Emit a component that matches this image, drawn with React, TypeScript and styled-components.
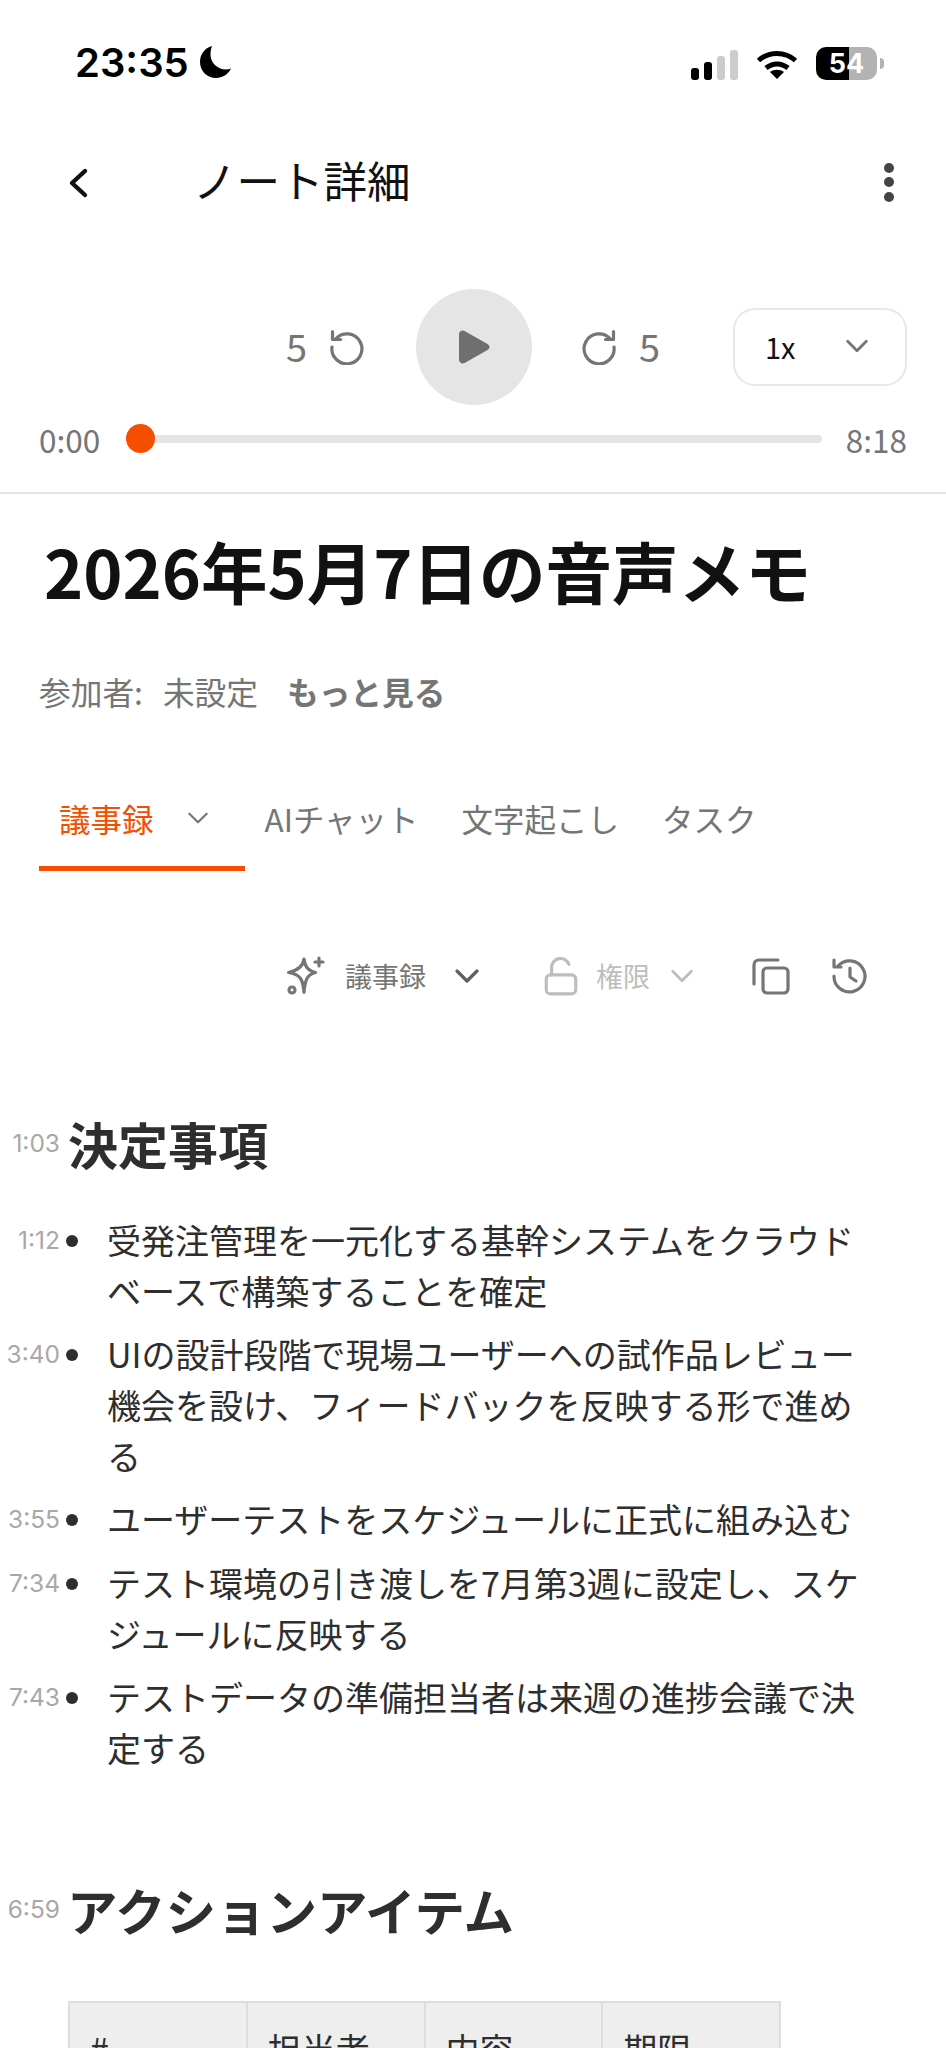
import React from "react";
import styled, { createGlobalStyle } from "styled-components";

const GlobalStyle = createGlobalStyle`
  html, body {
    margin: 0;
    padding: 0;
    background: #fff;
  }
  * {
    box-sizing: border-box;
  }
`;

const jp = `"Noto Sans CJK JP", "Noto Sans", sans-serif`;

const Page = styled.div`
  width: 946px;
  height: 2048px;
  overflow: hidden;
  background: #fff;
  font-family: ${jp};
  color: #2b2b2b;
`;

/* status bar */
const StatusBar = styled.div`
  height: 120px;
  padding: 42px 69px 0 75px;
  display: flex;
  justify-content: space-between;
  align-items: flex-start;
`;

const Clock = styled.div`
  display: flex;
  align-items: center;
  gap: 10px;
  height: 40px;
  font-family: Inter, sans-serif;
  font-size: 40px;
  font-weight: 600;
  color: #000;
`;

const StatusIcons = styled.div`
  display: flex;
  align-items: flex-end;
  height: 38px;
`;

const Signal = styled.div`
  display: flex;
  align-items: flex-end;
  gap: 5px;
  margin-right: 18px;
`;

const SignalBar = styled.span<{ $h: number; $on?: boolean }>`
  width: 8px;
  height: ${(p) => p.$h}px;
  border-radius: 3px;
  background: ${(p) => (p.$on ? "#000" : "#cccccc")};
`;

const Battery = styled.div`
  position: relative;
  width: 61px;
  height: 33px;
  margin-left: 18px;
  border-radius: 10px;
  background: linear-gradient(90deg, #000 54%, #b3b3b3 54%);
  color: #fff;
  font-family: Inter, sans-serif;
  font-size: 27px;
  font-weight: 700;
  line-height: 33px;
  text-align: center;

  &::after {
    content: "";
    position: absolute;
    right: -7px;
    top: 11px;
    width: 4px;
    height: 11px;
    border-radius: 0 4px 4px 0;
    background: #b3b3b3;
  }
`;

/* header */
const Header = styled.header`
  height: 126px;
  padding: 0 52px 0 64px;
  display: flex;
  align-items: center;
  margin-bottom: 43px;
`;

const Title = styled.h1`
  flex: 1;
  margin: 0 0 6px 99px;
  font-size: 43.5px;
  font-weight: 400;
  color: #111;
  line-height: 60px;
`;

const Dots = styled.div`
  display: flex;
  flex-direction: column;
  gap: 4.5px;
  margin-bottom: 2px;
`;

const Dot = styled.span`
  width: 10px;
  height: 10px;
  border-radius: 50%;
  background: #444;
`;

/* player */
const Transport = styled.div`
  height: 116px;
  padding: 0 39px 0 286px;
  display: flex;
  align-items: center;
`;

const SkipLabel = styled.span`
  font-size: 38px;
  line-height: 42px;
  padding-bottom: 2px;
  color: #757575;
`;

const Skip = styled.div<{ $gap: number }>`
  display: flex;
  align-items: center;
  gap: ${(p) => p.$gap}px;
`;

const PlayButton = styled.button`
  width: 116px;
  height: 116px;
  margin: 0 49px 0 51px;
  padding: 0;
  border: none;
  border-radius: 50%;
  background: #e5e5e5;
  display: flex;
  align-items: center;
  justify-content: center;
`;

const Speed = styled.div`
  width: 174px;
  height: 78px;
  margin-left: auto;
  padding: 0 34px 2px 30px;
  border: 2px solid #e8e8e8;
  border-radius: 22px;
  display: flex;
  align-items: center;
  justify-content: space-between;
  font-size: 29px;
  line-height: 40px;
  color: #111;
`;

const ProgressRow = styled.div`
  height: 89px;
  padding: 0 39px 20px;
  border-bottom: 2px solid #e5e5e5;
  display: flex;
  align-items: center;
  font-size: 31.5px;
  color: #757575;
`;

const Track = styled.div`
  flex: 1;
  height: 8px;
  margin: 0 24px 0 26px;
  border-radius: 4px;
  background: #e5e5e5;
  display: flex;
  align-items: center;
`;

const Thumb = styled.span`
  width: 29px;
  height: 29px;
  border-radius: 50%;
  background: #f54e00;
`;

/* note head */
const NoteTitle = styled.h2`
  margin: 31px 0 0 44px;
  font-size: 66.5px;
  line-height: 90px;
  font-weight: 700;
  color: #111;
`;

const Participants = styled.div`
  margin: 54px 0 0 39px;
  display: flex;
  font-size: 31.7px;
  line-height: 44px;
  color: #757575;
`;

const ParticipantValue = styled.span`
  margin-left: 20px;
`;

const More = styled.strong`
  margin-left: 29px;
  font-weight: 700;
`;

/* tabs */
const Tabs = styled.nav`
  margin: 68px 0 0 39px;
  display: flex;
  height: 90px;
`;

const Tab = styled.div<{ $active?: boolean }>`
  display: flex;
  align-items: center;
  gap: 31px;
  height: 90px;
  padding: ${(p) => (p.$active ? "0 34px 12px 20px" : "0 20px 12px")};
  margin-right: ${(p) => (p.$active ? "0" : "3px")};
  font-size: 31.5px;
  color: ${(p) => (p.$active ? "#f54e00" : "#757575")};
  border-bottom: 5px solid ${(p) => (p.$active ? "#f54e00" : "transparent")};
`;

/* note toolbar */
const Toolbar = styled.div`
  margin-top: 83px;
  padding-left: 286px;
  height: 44px;
  display: flex;
  align-items: center;
`;

const ToolLabel = styled.span<{ $muted?: boolean }>`
  font-size: 27px;
  line-height: 40px;
  color: ${(p) => (p.$muted ? "#bdbdbd" : "#757575")};
`;

const ToolGroup = styled.div<{ $gap: number; $after: number }>`
  display: flex;
  align-items: center;
  gap: ${(p) => p.$gap}px;
  margin-right: ${(p) => p.$after}px;
`;

const ToolSpacer = styled.span`
  width: 26px;
`;

/* document */
const Doc = styled.main`
  margin-top: 110px;
`;

const SectionHead = styled.div`
  display: flex;
  align-items: center;
  height: 70px;
  padding-left: 5px;
`;

const Stamp = styled.span`
  width: 55px;
  flex: none;
  text-align: right;
  font-family: Inter, sans-serif;
  font-size: 24.5px;
  color: #a8a8a8;
`;

const SectionTitle = styled.h3`
  margin: 0 0 0 8px;
  font-size: 50px;
  line-height: 70px;
  font-weight: 700;
  color: #2e2e2e;
`;

const ActionTitle = styled(SectionTitle)`
  margin-left: 7px;
  font-size: 50.5px;
`;

const List = styled.ul`
  list-style: none;
  margin: 36px 0 0;
  padding: 0;
  display: flex;
  flex-direction: column;
  gap: 12px;
`;

const Item = styled.li`
  display: grid;
  grid-template-columns: 60px 12px 802px;
  font-size: 34px;
  line-height: 51px;
  color: #2e2e2e;
`;

const ItemStamp = styled.span`
  padding-top: 1px;
  text-align: right;
  font-family: Inter, sans-serif;
  font-size: 24.5px;
  color: #a8a8a8;
`;

const Bullet = styled.span`
  width: 12px;
  height: 12px;
  margin: 21px 0 0 6px;
  border-radius: 50%;
  background: #2e2e2e;
`;

const ItemText = styled.span`
  margin-left: 35px;
`;

const ActionHead = styled(SectionHead)`
  margin-top: 101px;
`;

/* table */
const Table = styled.div`
  margin: 57px 0 0 68px;
  width: 713px;
  display: grid;
  grid-template-columns: repeat(4, 1fr);
  border: 2px solid #dddddd;
  border-right: none;
`;

const HeadCell = styled.div`
  padding: 20px 20px 24px;
  background: #eeeeee;
  border-right: 2px solid #dddddd;
  font-size: 34px;
  line-height: 51px;
  color: #2e2e2e;
`;

const ICON = "#757575";

const Chevron = ({ size, color = ICON, w = 2.4 }: { size: number; color?: string; w?: number }) => (
  <svg width={size} height={size} viewBox="0 0 24 24" fill="none" stroke={color} strokeWidth={w} strokeLinecap="round" strokeLinejoin="round">
    <path d="M4 8l8 8 8-8" />
  </svg>
);

const Moon = () => (
  <svg width="33" height="34" viewBox="0 0 33 34">
    <path d="M13 1C5.500 3 1 9.500 1 17c0 9 7 16 16 16 6.500 0 12-3.500 15-9.500-1.500.6-3.300.9-5 .9-9 0-15.500-7-15.500-15 0-3 .5-5.800 1.500-8.400z" fill="#000" />
  </svg>
);

const Wifi = () => (
  <svg width="42" height="30" viewBox="0 0 42 30" fill="none" stroke="#000" strokeWidth="5">
    <path d="M2.500 10.500C13 1 29 1 39.500 10.500" />
    <path d="M10 18c6.500-5.500 15.500-5.500 22 0" />
    <path d="M21 29l-7-7c4-3 10-3 14 0z" fill="#000" stroke="none" />
  </svg>
);

const Back = () => (
  <svg width="30" height="36" viewBox="0 0 30 36" fill="none" stroke="#111" strokeWidth="4.400" strokeLinecap="round" strokeLinejoin="round">
    <path d="M21 6L8 18l13 12" />
  </svg>
);

const Undo = ({ flip }: { flip?: boolean }) => (
  <svg width="36" height="36" viewBox="0 0 36 36" fill="none" stroke={ICON} strokeWidth="3.200" strokeLinecap="round" strokeLinejoin="round" style={flip ? { transform: "scaleX(-1)" } : undefined}>
    <path d="M7 9.500A15 15 0 1 1 3 18" />
    <path d="M3.500 2.500v8h8" />
  </svg>
);

const Play = () => (
  <svg width="32" height="34" viewBox="0 0 32 34">
    <path d="M1 4.500C1 1 4.500-.5 7.500 1.500l22 12.500c2.600 1.500 2.600 4.500 0 6L7.500 32.500C4.500 34.500 1 33 1 29.500z" fill="#6f6f6f" />
  </svg>
);

const Sparkle = () => (
  <svg width="40" height="40" viewBox="0 0 40 40" fill="none" stroke={ICON} strokeWidth="3.200" strokeLinecap="round" strokeLinejoin="round">
    <path d="M18 3c1 7.500 3.500 11.500 11.500 13.500C21.500 18.500 19 23 18 36.500c-1-13.500-3.500-18-15.500-20C12 14.500 17 10.500 18 3z" />
    <path d="M33 2v8M29 6h8" />
    <circle cx="6" cy="34" r="3" />
  </svg>
);

const Lock = () => (
  <svg width="34" height="40" viewBox="0 0 32 38" fill="none" stroke="#bdbdbd" strokeWidth="3" strokeLinecap="round" strokeLinejoin="round">
    <rect x="2" y="18" width="28" height="18" rx="4" />
    <path d="M7 18v-7a8.500 8.500 0 0 1 16.500-3" />
  </svg>
);

const Copy = () => (
  <svg width="38" height="38" viewBox="0 0 38 38" fill="none" stroke={ICON} strokeWidth="3.200" strokeLinecap="round" strokeLinejoin="round">
    <rect x="11" y="11" width="25" height="25" rx="4" />
    <path d="M26 3H7a5 5 0 0 0-5 5v19" />
  </svg>
);

const History = () => (
  <svg width="38" height="38" viewBox="0 0 38 38" fill="none" stroke={ICON} strokeWidth="3.200" strokeLinecap="round" strokeLinejoin="round">
    <path d="M7 9a15.500 15.500 0 1 1-4 10" />
    <path d="M3 3v7h7" />
    <path d="M19 11v9l6 4" />
  </svg>
);

const decisions = [
  { time: "1:12", text: "受発注管理を一元化する基幹システムをクラウドベースで構築することを確定" },
  { time: "3:40", text: "UIの設計段階で現場ユーザーへの試作品レビュー機会を設け、フィードバックを反映する形で進める" },
  { time: "3:55", text: "ユーザーテストをスケジュールに正式に組み込む" },
  { time: "7:34", text: "テスト環境の引き渡しを7月第3週に設定し、スケジュールに反映する" },
  { time: "7:43", text: "テストデータの準備担当者は来週の進捗会議で決定する" },
];

const App = () => {
  return (
    <Page>
      <GlobalStyle />
      <StatusBar>
        <Clock>
          23:35
          <Moon />
        </Clock>
        <StatusIcons>
          <Signal>
            <SignalBar $h={12} $on />
            <SignalBar $h={18} $on />
            <SignalBar $h={24} />
            <SignalBar $h={30} />
          </Signal>
          <Wifi />
          <Battery>54</Battery>
        </StatusIcons>
      </StatusBar>

      <Header>
        <Back />
        <Title>ノート詳細</Title>
        <Dots>
          <Dot />
          <Dot />
          <Dot />
        </Dots>
      </Header>

      <Transport>
        <Skip $gap={22}>
          <SkipLabel>5</SkipLabel>
          <Undo />
        </Skip>
        <PlayButton>
          <Play />
        </PlayButton>
        <Skip $gap={22}>
          <Undo flip />
          <SkipLabel>5</SkipLabel>
        </Skip>
        <Speed>
          1x
          <Chevron size={28} />
        </Speed>
      </Transport>
      <ProgressRow>
        0:00
        <Track>
          <Thumb />
        </Track>
        8:18
      </ProgressRow>

      <NoteTitle>2026年5月7日の音声メモ</NoteTitle>
      <Participants>
        参加者:
        <ParticipantValue>未設定</ParticipantValue>
        <More>もっと見る</More>
      </Participants>

      <Tabs>
        <Tab $active>
          議事録
          <Chevron size={26} color="#757575" w={2} />
        </Tab>
        <Tab>AIチャット</Tab>
        <Tab>文字起こし</Tab>
        <Tab>タスク</Tab>
      </Tabs>

      <Toolbar>
        <ToolGroup $gap={19} $after={0}>
          <Sparkle />
          <ToolLabel>議事録</ToolLabel>
        </ToolGroup>
        <ToolGroup $gap={0} $after={62}>
          <ToolSpacer />
          <Chevron size={30} color="#606060" w={2.6} />
        </ToolGroup>
        <ToolGroup $gap={18} $after={56}>
          <Lock />
          <ToolLabel $muted>権限</ToolLabel>
          <Chevron size={28} color="#bdbdbd" w={2.4} />
        </ToolGroup>
        <ToolGroup $gap={0} $after={41}>
          <Copy />
        </ToolGroup>
        <History />
      </Toolbar>

      <Doc>
        <SectionHead>
          <Stamp>1:03</Stamp>
          <SectionTitle>決定事項</SectionTitle>
        </SectionHead>
        <List>
          {decisions.map((d) => (
            <Item key={d.time}>
              <ItemStamp>{d.time}</ItemStamp>
              <Bullet />
              <ItemText>{d.text}</ItemText>
            </Item>
          ))}
        </List>

        <ActionHead>
          <Stamp>6:59</Stamp>
          <ActionTitle>アクションアイテム</ActionTitle>
        </ActionHead>
        <Table>
          <HeadCell>#</HeadCell>
          <HeadCell>担当者</HeadCell>
          <HeadCell>内容</HeadCell>
          <HeadCell>期限</HeadCell>
        </Table>
      </Doc>
    </Page>
  );
};

export default App;
